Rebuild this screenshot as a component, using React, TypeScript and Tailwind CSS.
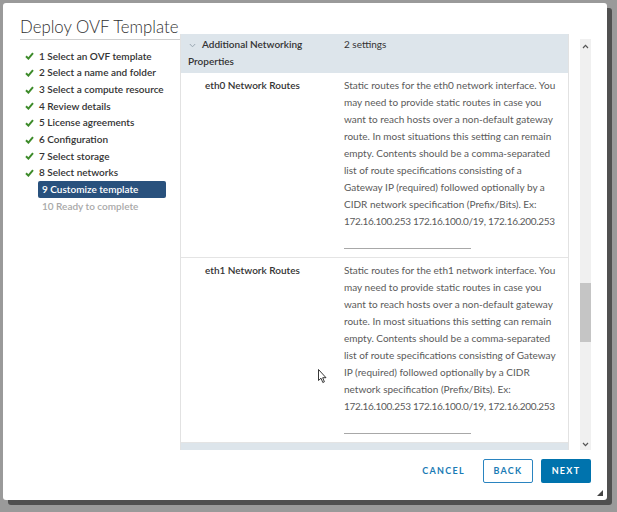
import React from "react";

const steps = [
  "1 Select an OVF template",
  "2 Select a name and folder",
  "3 Select a compute resource",
  "4 Review details",
  "5 License agreements",
  "6 Configuration",
  "7 Select storage",
  "8 Select networks",
];

const eth0Lines = [
  "Static routes for the eth0 network interface. You",
  "may need to provide static routes in case you",
  "want to reach hosts over a non-default gateway",
  "route. In most situations this setting can remain",
  "empty. Contents should be a comma-separated",
  "list of route specifications consisting of a",
  "Gateway IP (required) followed optionally by a",
  "CIDR network specification (Prefix/Bits). Ex:",
  "172.16.100.253 172.16.100.0/19, 172.16.200.253",
];

const eth1Lines = [
  "Static routes for the eth1 network interface. You",
  "may need to provide static routes in case you",
  "want to reach hosts over a non-default gateway",
  "route. In most situations this setting can remain",
  "empty. Contents should be a comma-separated",
  "list of route specifications consisting of Gateway",
  "IP (required) followed optionally by a CIDR",
  "network specification (Prefix/Bits). Ex:",
  "172.16.100.253 172.16.100.0/19, 172.16.200.253",
];

function Check() {
  return (
    <svg width="9" height="8" viewBox="0 0 9 8" className="shrink-0">
      <path d="M1 4.2 L3.4 6.6 L8 1.2" fill="none" stroke="#3d8b2a" strokeWidth="2" />
    </svg>
  );
}

function RouteRow({ name, lines }: { name: string; lines: string[] }) {
  return (
    <div className="flex border-b border-[#e4e4e4] pt-[4px] pb-[8px]">
      <div className="w-[163px] shrink-0 pl-[24px] text-[#333] font-semibold leading-[17px]">{name}</div>
      <div className="flex-1 min-w-0">
        <div className="text-[#5a5a5a] leading-[17px]">
          {lines.map((l, i) =>
            i === lines.length - 1 ? (
              <span key={l} className="block whitespace-nowrap tracking-[-0.3px]">
                {l}
              </span>
            ) : (
              <span key={l} className="block whitespace-nowrap">
                {l}
              </span>
            )
          )}
        </div>
        <div className="mt-[18px] w-[127px] border-b border-[#a8a8a8]" />
      </div>
    </div>
  );
}

export default function App() {
  return (
    <div
      className="relative w-[617px] h-[512px] overflow-hidden bg-[#9a9a9a] pl-[3px] pt-[3px]"
      style={{ fontFamily: "Lato, 'Noto Sans', sans-serif" }}
    >
      <div className="w-[604px] h-[497px] bg-white rounded-[3px] shadow-[5px_5px_0_#505050] flex flex-col text-[10px]">
        <div className="h-[31px] pl-[17px] pt-[14px] text-[16.8px] leading-[20px] text-[#313131] font-light">
          Deploy OVF Template
        </div>
        <div className="flex h-[416px]">
          <nav className="w-[177px] shrink-0">
            <div className="ml-[17px] mt-[5px] border-t border-[#cfcfcf] pt-[8px] pl-[5px]">
              {steps.map((s) => (
                <div key={s} className="flex items-center gap-[5px] h-[16.67px] font-semibold text-[#333]">
                  <Check />
                  <span>{s}</span>
                </div>
              ))}
              <div className="ml-[13px] mr-[14px] h-[16.67px] flex items-center pl-[4px] rounded-[2px] bg-[#29517d] text-white font-semibold">
                9 Customize template
              </div>
              <div className="ml-[13px] h-[16.67px] flex items-center pl-[4px] text-[#a9a9a9] font-semibold">
                10 Ready to complete
              </div>
            </div>
          </nav>
          <div className="flex w-[411px] shrink-0">
            <div className="w-[389px] shrink-0 border-l border-r border-[#e2e2e2] overflow-hidden">
              <div className="bg-[#dde5eb] flex pt-[2px] pb-[3px] leading-[17px] text-[#333]">
                <div className="w-[163px] shrink-0 pl-[7px] font-semibold">
                  <span className="inline-flex w-[14px] items-center">
                    <svg width="7" height="5" viewBox="0 0 7 5" className="ml-[1px]">
                      <path d="M0.8 1 L3.5 3.8 L6.2 1" fill="none" stroke="#9aa7b2" strokeWidth="1" />
                    </svg>
                  </span>
                  Additional Networking Properties
                </div>
                <div className="flex-1">2 settings</div>
              </div>
              <RouteRow name="eth0 Network Routes" lines={eth0Lines} />
              <RouteRow name="eth1 Network Routes" lines={eth1Lines} />
              <div className="bg-[#dde5eb] h-[20px]" />
            </div>
            <div className="w-[11px] shrink-0" />
            <div className="w-[11px] shrink-0 mt-[5px] bg-[#f0f0f0] flex flex-col items-center">
              <svg width="7" height="5" viewBox="0 0 7 5" className="mt-[5px]">
                <path d="M1 4 L3.5 1.3 L6 4" fill="none" stroke="#555" strokeWidth="1.2" />
              </svg>
              <div className="mt-[234px] w-full h-[59px] bg-[#c5c5c5]" />
              <div className="flex-1" />
              <svg width="7" height="5" viewBox="0 0 7 5" className="mb-[3px]">
                <path d="M1 1 L3.5 3.7 L6 1" fill="none" stroke="#555" strokeWidth="1.2" />
              </svg>
            </div>
          </div>
        </div>
        <div className="flex justify-end items-center gap-[8px] pr-[16px] pt-[9px]">
          <button className="h-[24px] px-[6px] text-[9px] font-bold tracking-[1.3px] text-[#1a7bb5] mr-[4px]">
            CANCEL
          </button>
          <button className="w-[50px] h-[24px] rounded-[2px] border border-[#2a84c0] text-[9px] font-bold tracking-[1.3px] text-[#1a7bb5]">
            BACK
          </button>
          <button className="w-[50px] h-[24px] rounded-[2px] bg-[#0073ad] text-[9px] font-bold tracking-[1.3px] text-white">
            NEXT
          </button>
        </div>
        <div className="flex-1 flex justify-end items-end pr-[4px] pb-[4px]">
          <svg width="6" height="6" viewBox="0 0 6 6">
            <path d="M6 0 L6 6 L0 6 Z" fill="#444" />
          </svg>
        </div>
      </div>
      {/* mouse pointer resting over the form */}
      <svg
        width="10"
        height="15"
        viewBox="0 0 10 15"
        className="absolute left-[318px] top-[369px]"
      >
        <path d="M0.5 0.5 L0.5 11.5 L3 9.2 L4.8 13.5 L6.4 12.8 L4.7 8.7 L8 8.7 Z" fill="#fff" stroke="#222" strokeWidth="0.9" />
      </svg>
    </div>
  );
}
